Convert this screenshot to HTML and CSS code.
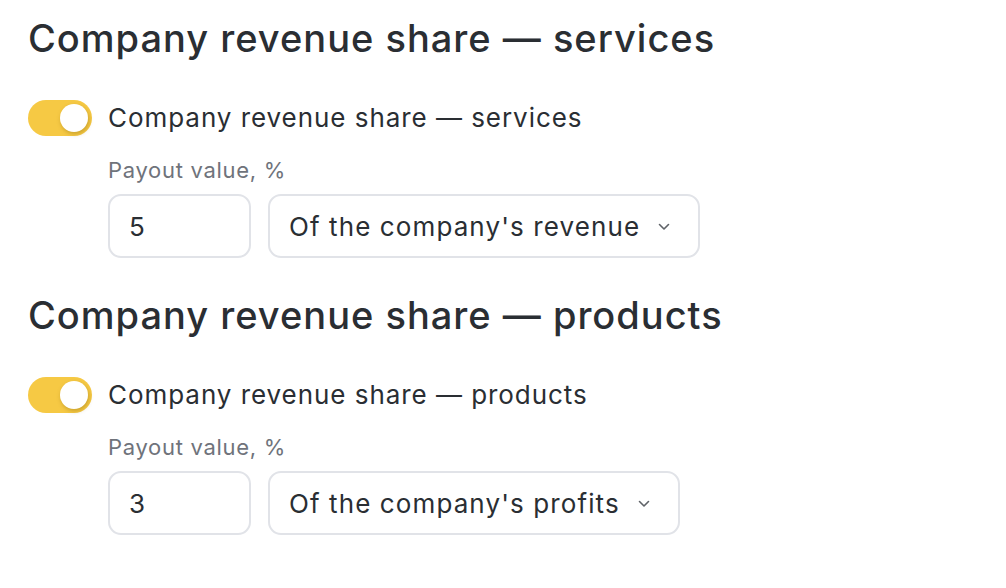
FILE: index.html
```html
<!DOCTYPE html>
<html lang="en">
<head>
<meta charset="utf-8">
<link rel="stylesheet" href="styles.css">
</head>
<body>
<main class="page">
  <section class="block">
    <h2 class="title">Company revenue share — services</h2>
    <div class="switch-row">
      <span class="switch on"><span class="knob"></span></span>
      <span class="switch-label">Company revenue share — services</span>
    </div>
    <div class="field">
      <div class="field-label">Payout value, %</div>
      <div class="inputs">
        <div class="box num">5</div>
        <div class="box select">Of the company's revenue
          <svg class="chev" width="12" height="8" viewBox="0 0 12 8"><path d="M1.5 1.5 L6 6 L10.5 1.5" fill="none" stroke="#5f6368" stroke-width="1.6" stroke-linecap="round" stroke-linejoin="round"/></svg>
        </div>
      </div>
    </div>
  </section>
  <section class="block">
    <h2 class="title">Company revenue share — products</h2>
    <div class="switch-row">
      <span class="switch on"><span class="knob"></span></span>
      <span class="switch-label">Company revenue share — products</span>
    </div>
    <div class="field">
      <div class="field-label">Payout value, %</div>
      <div class="inputs">
        <div class="box num">3</div>
        <div class="box select">Of the company's profits
          <svg class="chev" width="12" height="8" viewBox="0 0 12 8"><path d="M1.5 1.5 L6 6 L10.5 1.5" fill="none" stroke="#5f6368" stroke-width="1.6" stroke-linecap="round" stroke-linejoin="round"/></svg>
        </div>
      </div>
    </div>
  </section>
</main>
</body>
</html>
```
FILE: styles.css
```css
html, body {
  margin: 0;
  padding: 0;
  background: #ffffff;
}
body {
  font-family: Inter, "Noto Sans", sans-serif;
  color: #2a2e33;
}
.page {
  padding: 15px 28px 0 28px;
  display: flex;
  flex-direction: column;
  gap: 34px;
}
.block {
  display: flex;
  flex-direction: column;
}
.title {
  margin: 0;
  font-size: 38px;
  font-weight: 500;
  line-height: 46px;
  letter-spacing: 1px;
}
.switch-row {
  display: flex;
  align-items: center;
  gap: 16px;
  margin-top: 39px;
}
.switch {
  width: 64px;
  height: 36px;
  border-radius: 18px;
  background: #f6c944;
  display: flex;
  align-items: center;
  justify-content: flex-end;
  padding: 0 4px;
  box-sizing: border-box;
  flex: none;
}
.knob {
  width: 28px;
  height: 28px;
  border-radius: 50%;
  background: #ffffff;
  box-shadow: 1px 2px 4px rgba(120, 90, 0, 0.35);
}
.switch-label {
  font-size: 26px;
  line-height: 36px;
  letter-spacing: 0.95px;
}
.field {
  margin-left: 80px;
  margin-top: 20px;
  display: flex;
  flex-direction: column;
  gap: 10px;
}
.field-label {
  font-size: 22px;
  line-height: 28px;
  color: #6f737b;
  letter-spacing: 0.7px;
}
.inputs {
  display: flex;
  gap: 17px;
}
.box {
  height: 64px;
  box-sizing: border-box;
  border: 2px solid #e1e3e8;
  border-radius: 13px;
  display: flex;
  align-items: center;
  font-size: 26px;
  letter-spacing: 1.1px;
  color: #2a2e33;
}
.num {
  width: 143px;
  padding-left: 19px;
}
.select {
  padding: 0 28px 0 19px;
  gap: 18px;
}
.chev {
  flex: none;
  margin-top: 2px;
}
```
